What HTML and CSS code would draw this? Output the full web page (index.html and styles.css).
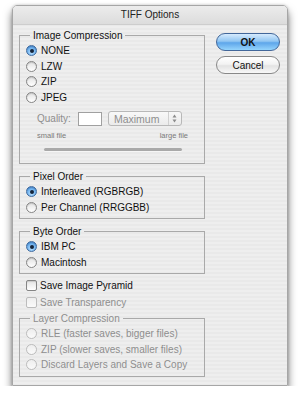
FILE: index.html
```html
<!DOCTYPE html>
<html>
<head>
<meta http-equiv="Content-Type" content="text/html; charset=utf-8"/>
<title>TIFF Options</title>
<link rel="stylesheet" href="styles.css">
</head>
<body>
<div class="window">
  <div class="titlebar">TIFF Options</div>
  <div class="content">
    <div class="options">
      <fieldset class="group first compression">
        <legend>Image Compression</legend>
        <div class="row"><span class="radio on"></span>NONE</div>
        <div class="row"><span class="radio"></span>LZW</div>
        <div class="row"><span class="radio"></span>ZIP</div>
        <div class="row"><span class="radio"></span>JPEG</div>
        <div class="quality">
          <span class="muted">Quality:</span>
          <span class="field"></span>
          <span class="select">Maximum
            <span class="stepper">
              <svg width="5" height="9" viewBox="0 0 5 9"><path d="M2.5 0.5 L4.5 3.5 L0.5 3.5 Z M2.5 8.5 L4.5 5.5 L0.5 5.5 Z" fill="#8c8c8c"/></svg>
            </span>
          </span>
        </div>
        <div class="scale"><span>small file</span><span>large file</span></div>
        <div class="track"></div>
      </fieldset>

      <fieldset class="group">
        <legend>Pixel Order</legend>
        <div class="row"><span class="radio on"></span>Interleaved (RGBRGB)</div>
        <div class="row"><span class="radio"></span>Per Channel (RRGGBB)</div>
      </fieldset>

      <fieldset class="group">
        <legend>Byte Order</legend>
        <div class="row"><span class="radio on"></span>IBM PC</div>
        <div class="row"><span class="radio"></span>Macintosh</div>
      </fieldset>

      <div class="checks">
        <div class="row check-row"><span class="checkbox"></span>Save Image Pyramid</div>
        <div class="row check-row disabled"><span class="checkbox"></span>Save Transparency</div>
      </div>

      <fieldset class="group disabled layers">
        <legend>Layer Compression</legend>
        <div class="row"><span class="radio"></span>RLE (faster saves, bigger files)</div>
        <div class="row"><span class="radio"></span>ZIP (slower saves, smaller files)</div>
        <div class="row"><span class="radio"></span>Discard Layers and Save a Copy</div>
      </fieldset>
    </div>

    <div class="buttons">
      <button class="btn default">OK</button>
      <button class="btn">Cancel</button>
    </div>
  </div>
</div>
</body>
</html>
```

FILE: styles.css
```css
body {
  margin: 0;
  background-color: white;
  font-family: "Liberation Sans", Arial, sans-serif;
  font-size: 10px;
  color: #111;
}

.window {
  margin: 5px 0 0 12px;
  width: 274px;
  border: 1px solid #a6a6a6;
  border-radius: 5px 5px 0 0;
  background: repeating-linear-gradient(#eeeeee 0, #eeeeee 2px, #e9e9e9 2px, #e9e9e9 4px);
  box-shadow: 0 6px 9px rgba(0, 0, 0, 0.55), 0 0 3px rgba(0, 0, 0, 0.2);
}

.titlebar {
  height: 18px;
  line-height: 18px;
  text-align: center;
  color: #222;
  border-radius: 4px 4px 0 0;
  background: linear-gradient(#ececec, #dcdcdc);
  border-bottom: 1px solid #cdcdcd;
}

.content {
  display: flex;
  padding: 4px 7px 8px 6px;
}

.options {
  width: 186px;
}

/* group boxes */
.group {
  margin: 6px 0 0;
  padding: 1px 6px 3px;
  border: 1px solid #a9a9a9;
  min-width: 0;
}

.group.first {
  margin-top: 0;
}

.group.compression {
  padding-bottom: 12px;
}

.group.layers {
  margin-top: 1px;
}

legend {
  margin-left: 4px;
  padding: 0 3px;
  line-height: 13px;
}

.row {
  display: flex;
  align-items: center;
  height: 15.5px;
  white-space: nowrap;
}

.check-row {
  height: 17px;
}

.checks {
  margin-top: 3px;
  padding-left: 7px;
}

.disabled, .muted {
  color: #8e8e8e;
}

/* radio buttons */
.radio {
  width: 9px;
  height: 9px;
  margin-right: 4px;
  border: 1px solid #858585;
  border-radius: 50%;
  background: linear-gradient(#e2e2e2, #ffffff);
  box-shadow: inset 0 1px 1px rgba(0, 0, 0, 0.15);
  display: flex;
  align-items: center;
  justify-content: center;
  flex: none;
}

.radio.on {
  border-color: #3f6a9e;
  background: radial-gradient(circle at 50% 70%, #bfe3ff 0, #6fb2ef 55%, #3f86d6 100%);
}

.radio.on::after {
  content: "";
  width: 4px;
  height: 4px;
  border-radius: 50%;
  background: #14243a;
}

.disabled .radio, .disabled .checkbox {
  border-color: #bcbcbc;
  background: linear-gradient(#eeeeee, #fafafa);
  box-shadow: none;
}

.checkbox {
  width: 9px;
  height: 9px;
  margin-right: 3px;
  border: 1px solid #858585;
  border-radius: 2px;
  background: linear-gradient(#e4e4e4, #ffffff);
  box-shadow: inset 0 1px 1px rgba(0, 0, 0, 0.12);
  flex: none;
}

/* quality controls */
.quality {
  display: flex;
  align-items: center;
  height: 15px;
  margin-top: 6px;
  padding-left: 11px;
}

.field {
  width: 22px;
  height: 12px;
  margin-left: 7px;
  border: 1px solid #a0a0a0;
  background: white;
}

.select {
  display: flex;
  align-items: center;
  width: 67px;
  height: 13px;
  margin-left: 6px;
  padding-left: 5px;
  border: 1px solid #b8b8b8;
  border-radius: 3px;
  background: linear-gradient(#f8f8f8, #ebebeb);
  color: #8e8e8e;
  font-size: 10.5px;
}

.stepper {
  margin-left: auto;
  width: 12px;
  height: 13px;
  border-left: 1px solid #d0d0d0;
  display: flex;
  align-items: center;
  justify-content: center;
}

.scale {
  display: flex;
  justify-content: space-between;
  margin: 5px 10px 0 11px;
  font-size: 7.5px;
  line-height: 10px;
  color: #7a7a7a;
}

.track {
  height: 3px;
  margin: 7px 16px 0 18px;
  border-radius: 2px;
  background: #a9a9a9;
  box-shadow: 0 1px 0 #f6f6f6;
}

/* buttons */
.buttons {
  display: flex;
  flex-direction: column;
  gap: 5px;
  margin-left: 11px;
  padding-top: 4px;
}

.btn {
  width: 64px;
  height: 18px;
  padding: 0;
  border: 1px solid #888;
  border-radius: 9px;
  font-family: "Liberation Sans", Arial, sans-serif;
  font-size: 10px;
  color: #111;
  background: linear-gradient(#ffffff 0%, #f3f3f3 45%, #e3e3e3 55%, #f8f8f8 100%);
}

.btn.default {
  border-color: #42679a;
  font-weight: bold;
  background: linear-gradient(#d6ebfd 0%, #92c6f2 45%, #5ea6ea 55%, #95d4fc 100%);
}
```
